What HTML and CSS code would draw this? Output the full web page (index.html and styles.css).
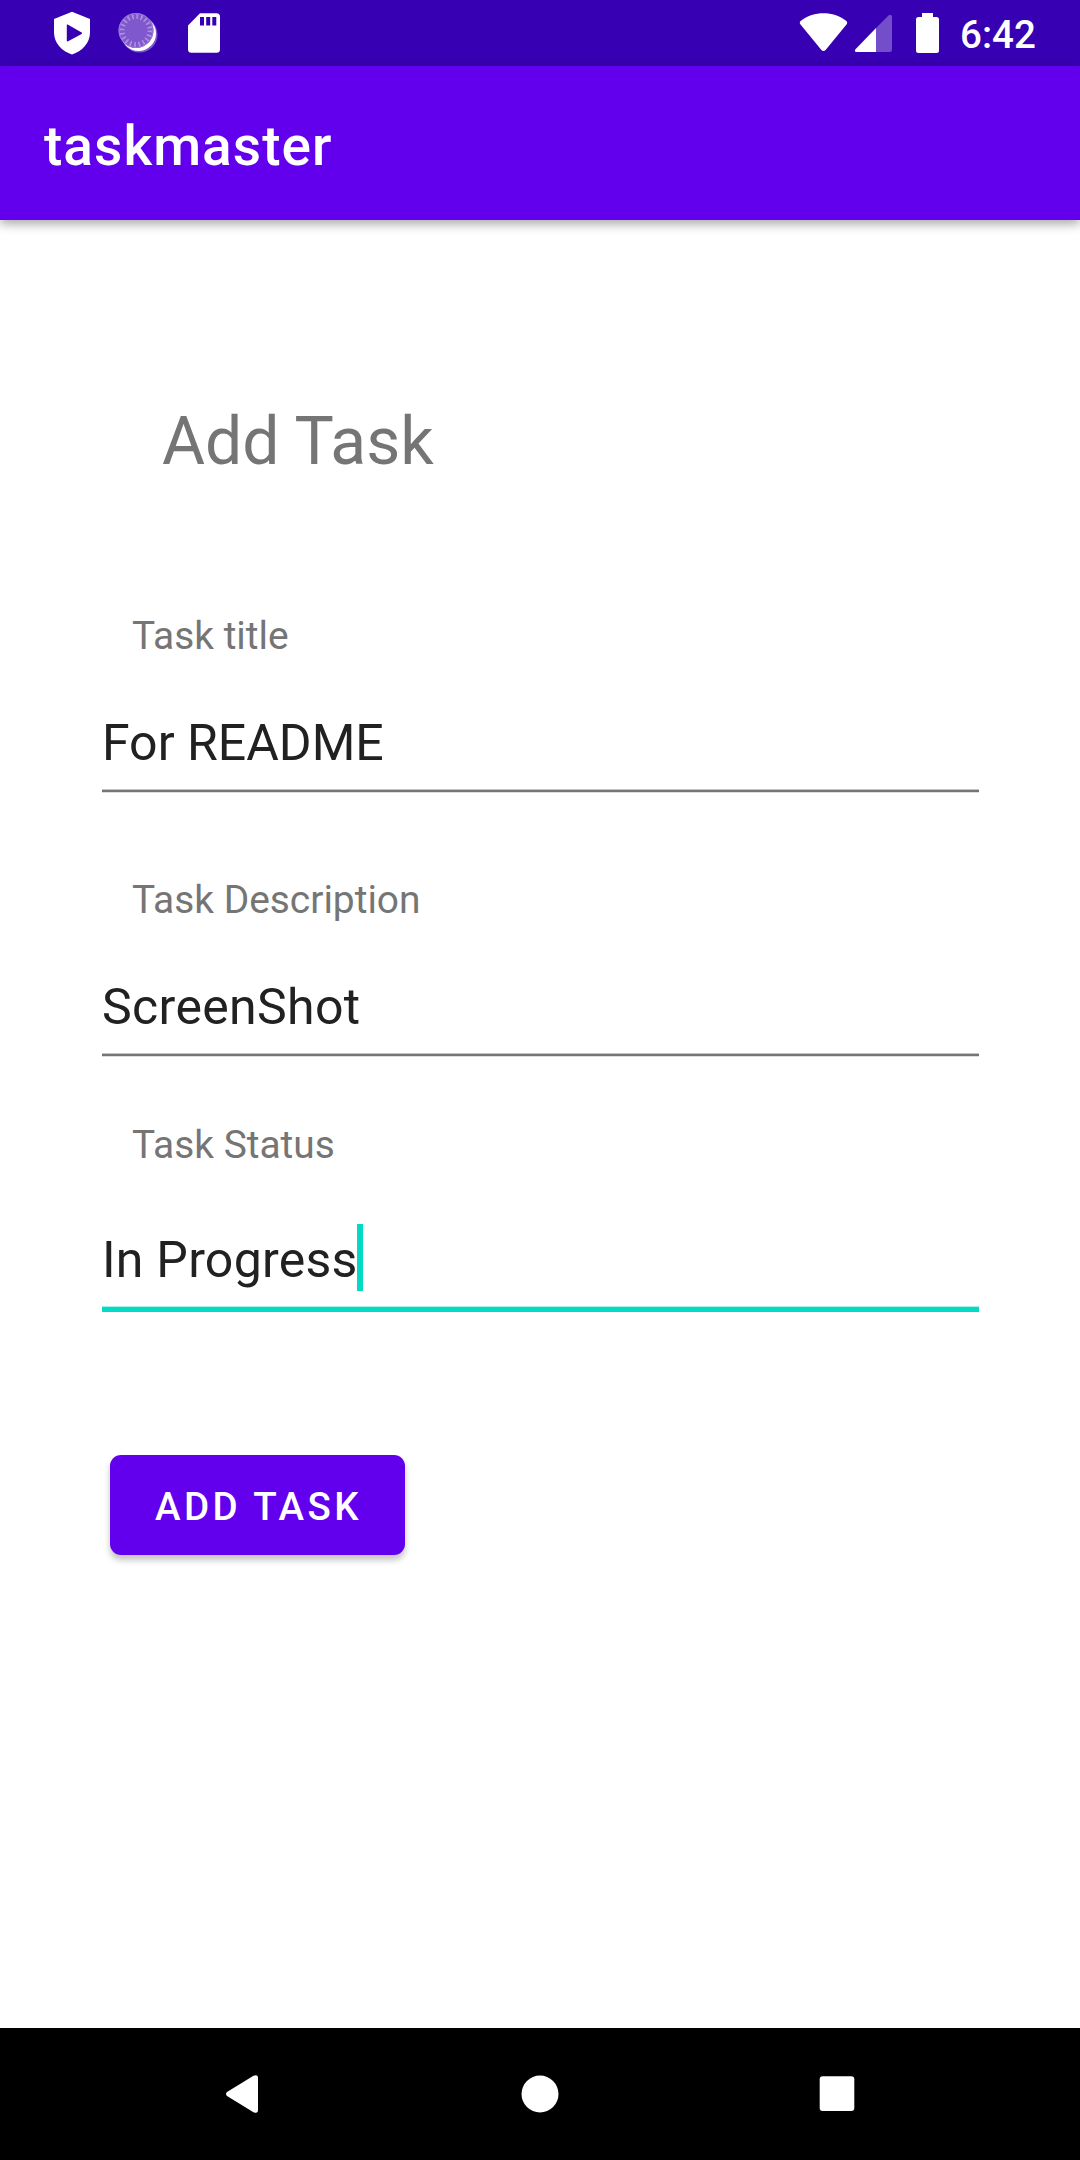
FILE: index.html
```html
<!DOCTYPE html>
<html lang="en">
<head>
<meta charset="utf-8">
<title>taskmaster</title>
<link rel="stylesheet" href="styles.css">
</head>
<body>
<div class="screen">
  <div class="status-bar">
    <svg class="status-left" width="190" height="66" viewBox="30 0 190 66">
      <path fill="#fff" fill-rule="evenodd" d="M72 11.8 90 19v13.500C90 43 82 51.500 72 54.500 62 51.500 54 43 54 32.500V19ZM66.800 25v15.800c0 .7.700.8 1.300.4l13.500-7.300c.8-.4.800-1 0-1.400L68.100 24.800c-.7-.4-1.300-.2-1.300.2Z"/>
      <circle cx="139.500" cy="34.500" r="18" fill="#fff" opacity=".35"/>
      <circle cx="138.500" cy="33.500" r="17.500" fill="#fff"/>
      <circle cx="136" cy="30.500" r="17.500" fill="#8058cd"/>
      <circle cx="136" cy="30.500" r="14" fill="none" stroke="#ab90df" stroke-width="5" stroke-dasharray="1.700 2.698"/>
      <circle cx="136" cy="30.500" r="17" fill="none" stroke="#9b7ad8" stroke-width="1"/>
      <path fill="#fff" fill-rule="evenodd" d="M200 13.200h16.500q3.500 0 3.500 3.500v32.500q0 3.500-3.500 3.500h-25q-3.500 0-3.500-3.500V25.500ZM200 17v8.500h4V17Zm6.200 0v8.500h4V17Zm6.100 0v8.500h4V17Z"/>
    </svg>
    <svg class="status-right" width="150" height="66" viewBox="795 0 150 66">
      <path fill="#fff" d="M800.500 24.500c-1.200-1.500-.8-3 .8-4C808 15.500 815 13.200 823.500 13.200s15.500 2.300 22.200 7.300c1.600 1 2 2.500.8 4L825.800 49.800c-1.400 1.600-3.200 1.600-4.600 0Z"/>
      <path fill="#fff" fill-opacity=".3" d="M876 28 888.500 15.500C890 14 892 14.800 892 17v32.500q0 2.500-2.500 2.500H876Z"/>
      <path fill="#fff" d="M876 28v24h-19.500c-1.800 0-2.200-1.500-1-2.700Z"/>
      <path fill="#fff" d="M922 13h11v4h3.500q2.500 0 2.500 2.500v31q0 2.500-2.500 2.500h-18q-2.500 0-2.500-2.500v-31q0-2.500 2.500-2.500h3.500Z"/>
    </svg>
    <span class="clock">6:42</span>
  </div>
  <header class="app-bar"><span class="app-title">taskmaster</span></header>
  <main class="content">
    <h1 class="heading">Add Task</h1>
    <section class="field">
      <div class="label">Task title</div>
      <div class="input">For README</div>
    </section>
    <section class="field">
      <div class="label">Task Description</div>
      <div class="input">ScreenShot</div>
    </section>
    <section class="field field-active">
      <div class="label">Task Status</div>
      <div class="input">In Progress<span class="caret"></span></div>
    </section>
    <button class="button" type="button">ADD TASK</button>
  </main>
  <nav class="nav-bar">
    <svg width="132" height="132" viewBox="180 2028 132 132"><path fill="#fff" d="M227 2092 253.500 2075.800Q258 2074 258 2078V2110Q258 2114 253.500 2112.200L227 2096Q225 2094 227 2092Z"/></svg>
    <svg width="132" height="132" viewBox="474 2028 132 132"><circle cx="540" cy="2094" r="18.500" fill="#fff"/></svg>
    <svg width="132" height="132" viewBox="768 2028 132 132"><rect x="819.700" y="2076.300" width="34.600" height="34.800" rx="3" fill="#fff"/></svg>
  </nav>
</div>
</body>
</html>
```
FILE: styles.css
```css
* { box-sizing: border-box; }
body { margin: 0; background: #fff; font-family: Roboto, sans-serif; }
.screen { width: 1080px; height: 2160px; display: flex; flex-direction: column; overflow: hidden; }
.status-bar { height: 66px; flex: none; display: flex; background: #3700b3; color: #fff; }
.status-left { margin-left: 30px; }
.status-right { margin-left: auto; }
.clock { width: 120px; margin-left: 15px; padding-top: 12px; font-size: 38.5px; line-height: 46px; font-weight: 500; }
.app-bar {
  height: 154px; flex: none; padding: 48px 44px 0;
  background: #6200ee; color: #fff;
  box-shadow: 0 4px 10px rgba(0, 0, 0, .34);
}
.app-title { display: block; font-size: 55px; line-height: 64px; font-weight: 500; letter-spacing: 1.05px; }
.content { flex: 1; display: flex; flex-direction: column; align-items: flex-start; padding: 183px 101px 0 102px; }
.heading { margin: 0 0 133px 60px; font-size: 66px; line-height: 77px; font-weight: 400; color: #757575; }
.field { align-self: stretch; margin-bottom: 85px; }
.label { margin-left: 30px; font-size: 38.9px; line-height: 46px; color: #757575; }
.input {
  display: flex; align-items: flex-start; height: 78px; margin-top: 55px;
  font-size: 50px; line-height: 58px; color: #212121;
  border-bottom: 2px solid #757575; box-shadow: 0 1px #dedede, inset 0 -1px #c4c4c4;
}
.field:nth-of-type(2) { margin-bottom: 66px; }
.field:nth-of-type(2) .input { letter-spacing: .35px; }
.field-active { margin-bottom: 143px; }
.field-active .input { height: 81px; margin-top: 63px; letter-spacing: .25px; border-bottom: 5px solid #03dac5; box-shadow: inset 0 -1px #a8f1e9; }
.caret { width: 6px; height: 67px; margin: -7px 0 0 -1px; background: #03dac5; }
.button {
  width: 295px; height: 100px; margin-left: 8px; padding: 4px 0 0 2px; border: 0; border-radius: 11px;
  background: #6200ee; color: #fff; font: 500 38.5px/46px Roboto, sans-serif; letter-spacing: .0893em;
  box-shadow: 0 5px 6px rgba(0, 0, 0, .24);
}
.nav-bar { height: 132px; flex: none; display: flex; justify-content: space-between; padding: 0 180px; background: #000; }
```
